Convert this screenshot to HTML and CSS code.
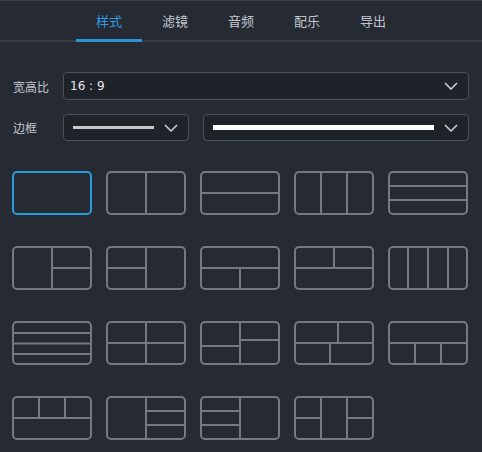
FILE: index.html
```html
<!DOCTYPE html>
<html>
<head>
<meta charset="utf-8">
<link rel="stylesheet" href="styles.css">
</head>
<body>
<div class="app">
  <div class="tabs">
    <div class="tab active">样式</div>
    <div class="tab">滤镜</div>
    <div class="tab">音频</div>
    <div class="tab">配乐</div>
    <div class="tab">导出</div>
  </div>
  <div class="form">
    <div class="row">
      <div class="label">宽高比</div>
      <div class="select grow">
        <span class="value">16 : 9</span>
        <svg class="chev" width="14" height="8" viewBox="0 0 14 8"><path d="M1 1 L7 7 L13 1" fill="none" stroke="#c9ccd1" stroke-width="1.6"/></svg>
      </div>
    </div>
    <div class="row">
      <div class="label">边框</div>
      <div class="select small">
        <span class="line thin"></span>
        <svg class="chev" width="14" height="8" viewBox="0 0 14 8"><path d="M1 1 L7 7 L13 1" fill="none" stroke="#c9ccd1" stroke-width="1.6"/></svg>
      </div>
      <div class="select grow">
        <span class="line thick"></span>
        <svg class="chev" width="14" height="8" viewBox="0 0 14 8"><path d="M1 1 L7 7 L13 1" fill="none" stroke="#c9ccd1" stroke-width="1.6"/></svg>
      </div>
    </div>
  </div>
  <div class="tiles">
    <svg class="tile" viewBox="0 0 80 44"><rect x="1" y="1" width="78" height="42" rx="4" class="sel"/></svg>
    <svg class="tile" viewBox="0 0 80 44"><rect x="1" y="1" width="78" height="42" rx="4"/><path d="M40 1V43"/></svg>
    <svg class="tile" viewBox="0 0 80 44"><rect x="1" y="1" width="78" height="42" rx="4"/><path d="M1 22H79"/></svg>
    <svg class="tile" viewBox="0 0 80 44"><rect x="1" y="1" width="78" height="42" rx="4"/><path d="M27 1V43M53 1V43"/></svg>
    <svg class="tile" viewBox="0 0 80 44"><rect x="1" y="1" width="78" height="42" rx="4"/><path d="M1 15H79M1 29H79"/></svg>

    <svg class="tile" viewBox="0 0 80 44"><rect x="1" y="1" width="78" height="42" rx="4"/><path d="M40 1V43M40 22H79"/></svg>
    <svg class="tile" viewBox="0 0 80 44"><rect x="1" y="1" width="78" height="42" rx="4"/><path d="M40 1V43M1 22H40"/></svg>
    <svg class="tile" viewBox="0 0 80 44"><rect x="1" y="1" width="78" height="42" rx="4"/><path d="M1 22H79M40 22V43"/></svg>
    <svg class="tile" viewBox="0 0 80 44"><rect x="1" y="1" width="78" height="42" rx="4"/><path d="M1 22H79M40 1V22"/></svg>
    <svg class="tile" viewBox="0 0 80 44"><rect x="1" y="1" width="78" height="42" rx="4"/><path d="M20 1V43M40 1V43M60 1V43"/></svg>

    <svg class="tile" viewBox="0 0 80 44"><rect x="1" y="1" width="78" height="42" rx="4"/><path d="M1 12H79M1 22.5H79M1 33H79"/></svg>
    <svg class="tile" viewBox="0 0 80 44"><rect x="1" y="1" width="78" height="42" rx="4"/><path d="M40 1V43M1 22H79"/></svg>
    <svg class="tile" viewBox="0 0 80 44"><rect x="1" y="1" width="78" height="42" rx="4"/><path d="M40 1V43M1 25H40M40 19H79"/></svg>
    <svg class="tile" viewBox="0 0 80 44"><rect x="1" y="1" width="78" height="42" rx="4"/><path d="M1 22H79M44 1V22M36 22V43"/></svg>
    <svg class="tile" viewBox="0 0 80 44"><rect x="1" y="1" width="78" height="42" rx="4"/><path d="M1 22H79M27 22V43M53 22V43"/></svg>

    <svg class="tile" viewBox="0 0 80 44"><rect x="1" y="1" width="78" height="42" rx="4"/><path d="M1 22H79M27 1V22M53 1V22"/></svg>
    <svg class="tile" viewBox="0 0 80 44"><rect x="1" y="1" width="78" height="42" rx="4"/><path d="M40 1V43M40 15H79M40 29H79"/></svg>
    <svg class="tile" viewBox="0 0 80 44"><rect x="1" y="1" width="78" height="42" rx="4"/><path d="M40 1V43M1 15H40M1 29H40"/></svg>
    <svg class="tile" viewBox="0 0 80 44"><rect x="1" y="1" width="78" height="42" rx="4"/><path d="M27 1V43M53 1V43M1 22H27M53 22H79"/></svg>
  </div>
</div>
</body>
</html>
```

FILE: styles.css
```css
html, body {
  margin: 0;
  padding: 0;
  background: #252a33;
}
.app {
  width: 482px;
  height: 452px;
  background: #252a33;
  font-family: "Noto Sans CJK SC", "Noto Sans", sans-serif;
  border-top: 1px solid #383d46;
  box-sizing: border-box;
  overflow: hidden;
}
.tabs {
  display: flex;
  justify-content: center;
  height: 39px;
  border-bottom: 2px solid #363b44;
}
.tab {
  width: 66px;
  text-align: center;
  font-size: 13px;
  line-height: 40px;
  color: #c3c7cd;
  box-sizing: border-box;
  height: 41px;
}
.tab.active {
  color: #2f9be0;
  border-bottom: 3px solid #2b93d3;
}
.form {
  display: flex;
  flex-direction: column;
  gap: 14px;
  padding: 30px 13px 0 13px;
}
.row {
  display: flex;
  align-items: center;
  gap: 14px;
}
.label {
  width: 36px;
  font-size: 12px;
  color: #c3c7cd;
}
.select {
  height: 28px;
  box-sizing: border-box;
  border: 1px solid #4b5059;
  border-radius: 4px;
  background: #1e2229;
  display: flex;
  align-items: center;
  padding: 0 10px 0 9px;
  gap: 10px;
}
.row:nth-child(2) .select { height: 27px; }
.grow { flex: 1; }
.small { width: 126px; }
.value {
  flex: 1;
  font-family: "DejaVu Sans", sans-serif;
  font-size: 12px;
  color: #e8eaed;
  margin-left: -3px;
}
.chev { flex: none; }
.line { flex: 1; display: block; }
.line.thin { height: 3px; background: #c6c8cc; }
.line.thick { height: 5px; background: #ffffff; }
.tiles {
  display: grid;
  grid-template-columns: repeat(5, 80px);
  column-gap: 14px;
  row-gap: 31px;
  padding: 30px 0 0 12px;
}
.tile {
  width: 80px;
  height: 44px;
  display: block;
}
.tile rect, .tile path {
  fill: none;
  stroke: #75797f;
  stroke-width: 2;
}
.tile rect.sel {
  stroke: #2a9ad8;
}
```
